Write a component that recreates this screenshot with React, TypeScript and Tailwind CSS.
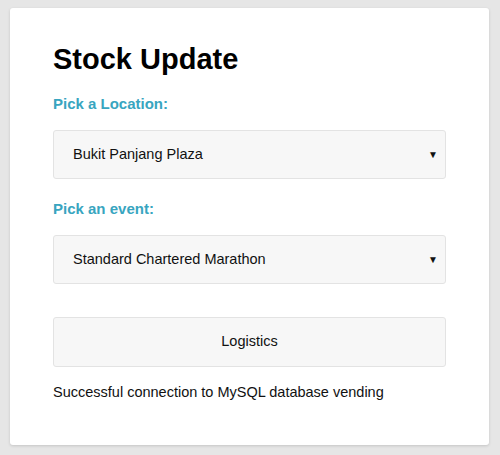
export default function App() {
  return (
    <div className="min-h-[455px] bg-[#e6e6e6] pt-[8px] pl-[10px] pr-[11px] font-['Liberation_Sans',Arial,sans-serif]">
      <div className="h-[437px] rounded-[3px] bg-white px-[43px] pt-[40px] shadow-[0_1px_3px_rgba(0,0,0,0.15)]">
        <h1 className="text-[29px] leading-[22px] font-bold text-black">Stock Update</h1>
        <label className="mt-[25px] block text-[15px] leading-[17px] font-bold text-[#38a5c0]">Pick a Location:</label>
        <div className="mt-[18px] flex h-[49px] items-center justify-between rounded-[3px] border border-[#e3e3e3] bg-[#f7f7f7] pl-[19px] pr-[7px] text-[14.5px] text-[#111]">
          <span>Bukit Panjang Plaza</span>
          <span className="text-[10px]">▼</span>
        </div>
        <label className="mt-[21px] block text-[15px] leading-[17px] font-bold text-[#38a5c0]">Pick an event:</label>
        <div className="mt-[18px] flex h-[49px] items-center justify-between rounded-[3px] border border-[#e3e3e3] bg-[#f7f7f7] pl-[19px] pr-[7px] text-[14.5px] text-[#111]">
          <span>Standard Chartered Marathon</span>
          <span className="text-[10px]">▼</span>
        </div>
        <button className="mt-[33px] flex h-[50px] w-full items-center justify-center rounded-[3px] border border-[#e3e3e3] bg-[#f7f7f7] text-[14.5px] text-[#111]">
          Logistics
        </button>
        <p className="mt-[16px] text-[14.5px] leading-[18px] text-[#111]">Successful connection to MySQL database vending</p>
      </div>
    </div>
  )
}
